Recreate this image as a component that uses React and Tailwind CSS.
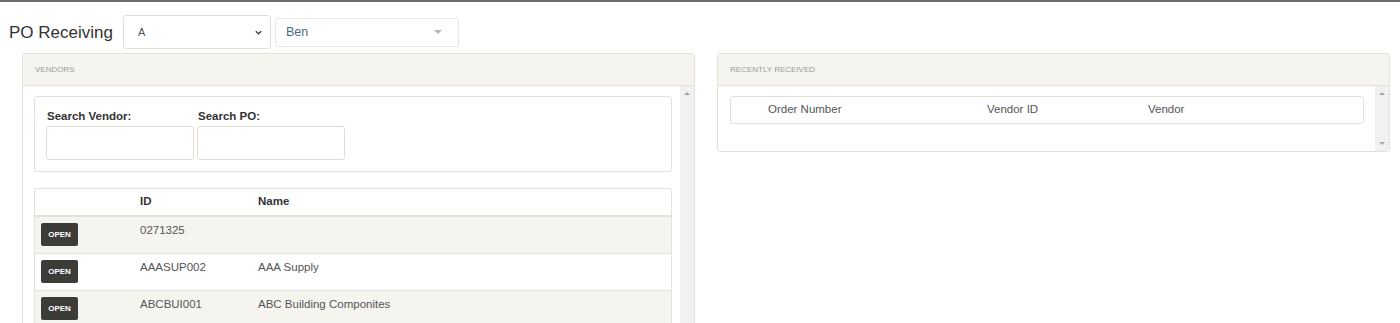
import React from 'react';

const vendors = [
  { id: '0271325', name: '' },
  { id: 'AAASUP002', name: 'AAA Supply' },
  { id: 'ABCBUI001', name: 'ABC Building Componites' },
];

function Scrollbar({ showDown }) {
  return (
    <div className="w-[14px] shrink-0 bg-[#f1f1f1] flex flex-col items-center justify-between py-[6px]">
      <div className="w-0 h-0 border-l-[3px] border-r-[3px] border-b-[3px] border-l-transparent border-r-transparent border-b-[#a3a3a3]"></div>
      {showDown && (
        <div className="w-0 h-0 border-l-[3px] border-r-[3px] border-t-[3px] border-l-transparent border-r-transparent border-t-[#a3a3a3]"></div>
      )}
    </div>
  );
}

function PanelHeader({ title }) {
  return (
    <div className="h-[32px] shrink-0 bg-[#f6f4ef] border-b border-[#e6e1d8] flex items-center px-[12px] text-[8px] text-[#9a9a9a] uppercase">
      {title}
    </div>
  );
}

export default function App() {
  return (
    <div className="w-[1400px] h-[323px] overflow-hidden bg-white border-t-2 border-[#6b6b6b] font-['Liberation_Sans',Arial,sans-serif] text-[#333]">
      {/* Title row */}
      <div className="flex items-center h-[48px] pt-[12px] pl-[9px]">
        <h1 className="text-[17px] text-[#333] leading-none mr-[10px]">PO Receiving</h1>
        <div className="w-[148px] h-[34px] border border-[#e3ddd2] rounded-[3px] flex items-center justify-between pl-[14px] pr-[7px] text-[11px] text-[#555]">
          <span>A</span>
          <svg width="9" height="9" viewBox="0 0 10 10">
            <path d="M2 3.5 L5 6.5 L8 3.5" fill="none" stroke="#444" strokeWidth="1.6" />
          </svg>
        </div>
        <div className="ml-[4px] w-[184px] h-[29px] border border-[#ebe7e0] rounded-[3px] flex items-center justify-between pl-[10px] pr-[16px] text-[12.5px] text-[#4e6a85]">
          <span>Ben</span>
          <div className="w-0 h-0 border-l-[4px] border-r-[4px] border-t-[4px] border-l-transparent border-r-transparent border-t-[#b5b5b5]"></div>
        </div>
      </div>

      <div className="flex items-start mt-[3px]">
        {/* Vendors panel */}
        <div className="ml-[22px] w-[673px] h-[280px] border border-[#e6e1d8] rounded-[3px] overflow-hidden flex flex-col">
          <PanelHeader title="Vendors" />
          <div className="flex flex-1 min-h-0">
            <div className="flex-1 pl-[11px] pr-[8px] pt-[10px]">
              <div className="border border-[#e6e1d8] rounded-[3px] h-[76px] pl-[11px] pt-[11px]">
                <div className="flex gap-[3px]">
                  <div className="w-[148px]">
                    <div className="text-[11.5px] font-bold text-[#333] h-[18px] pl-[1px]">Search Vendor:</div>
                    <div className="h-[34px] border border-[#e3ddd2] rounded-[3px]"></div>
                  </div>
                  <div className="w-[148px]">
                    <div className="text-[11.5px] font-bold text-[#333] h-[18px] pl-[1px]">Search PO:</div>
                    <div className="h-[34px] border border-[#e3ddd2] rounded-[3px]"></div>
                  </div>
                </div>
              </div>

              <div className="mt-[16px] border border-[#e6e1d8] rounded-t-[3px] text-[11.5px] text-[#555]">
                <div className="flex h-[28px] items-center font-bold text-[#333] border-b-2 border-[#e6e1d8]">
                  <div className="w-[105px]"></div>
                  <div className="w-[118px]">ID</div>
                  <div className="flex-1">Name</div>
                </div>
                {vendors.map((v, i) => (
                  <div
                    key={v.id}
                    className={`flex h-[37px] border-b border-[#e6e1d8] ${i % 2 === 0 ? 'bg-[#f6f4ef]' : 'bg-white'}`}
                  >
                    <div className="w-[105px] pl-[6px] pt-[6px]">
                      <button className="w-[37px] h-[23px] bg-[#3b3b37] rounded-[2px] text-white text-[8px] font-bold">
                        OPEN
                      </button>
                    </div>
                    <div className="w-[118px] pt-[5px]">{v.id}</div>
                    <div className="flex-1 pt-[5px]">{v.name}</div>
                  </div>
                ))}
              </div>
            </div>
            <Scrollbar />
          </div>
        </div>

        {/* Recently received panel */}
        <div className="ml-[22px] w-[673px] h-[99px] border border-[#e6e1d8] rounded-[3px] overflow-hidden flex flex-col">
          <PanelHeader title="Recently Received" />
          <div className="flex flex-1">
            <div className="flex-1 pl-[12px] pr-[11px] pt-[10px]">
              <div className="h-[28px] border border-[#e6e1d8] rounded-[3px] flex items-center text-[11.5px] text-[#555]">
                <div className="w-[256px] pl-[37px]">Order Number</div>
                <div className="w-[161px]">Vendor ID</div>
                <div className="flex-1">Vendor</div>
              </div>
            </div>
            <Scrollbar showDown />
          </div>
        </div>
      </div>
    </div>
  );
}
